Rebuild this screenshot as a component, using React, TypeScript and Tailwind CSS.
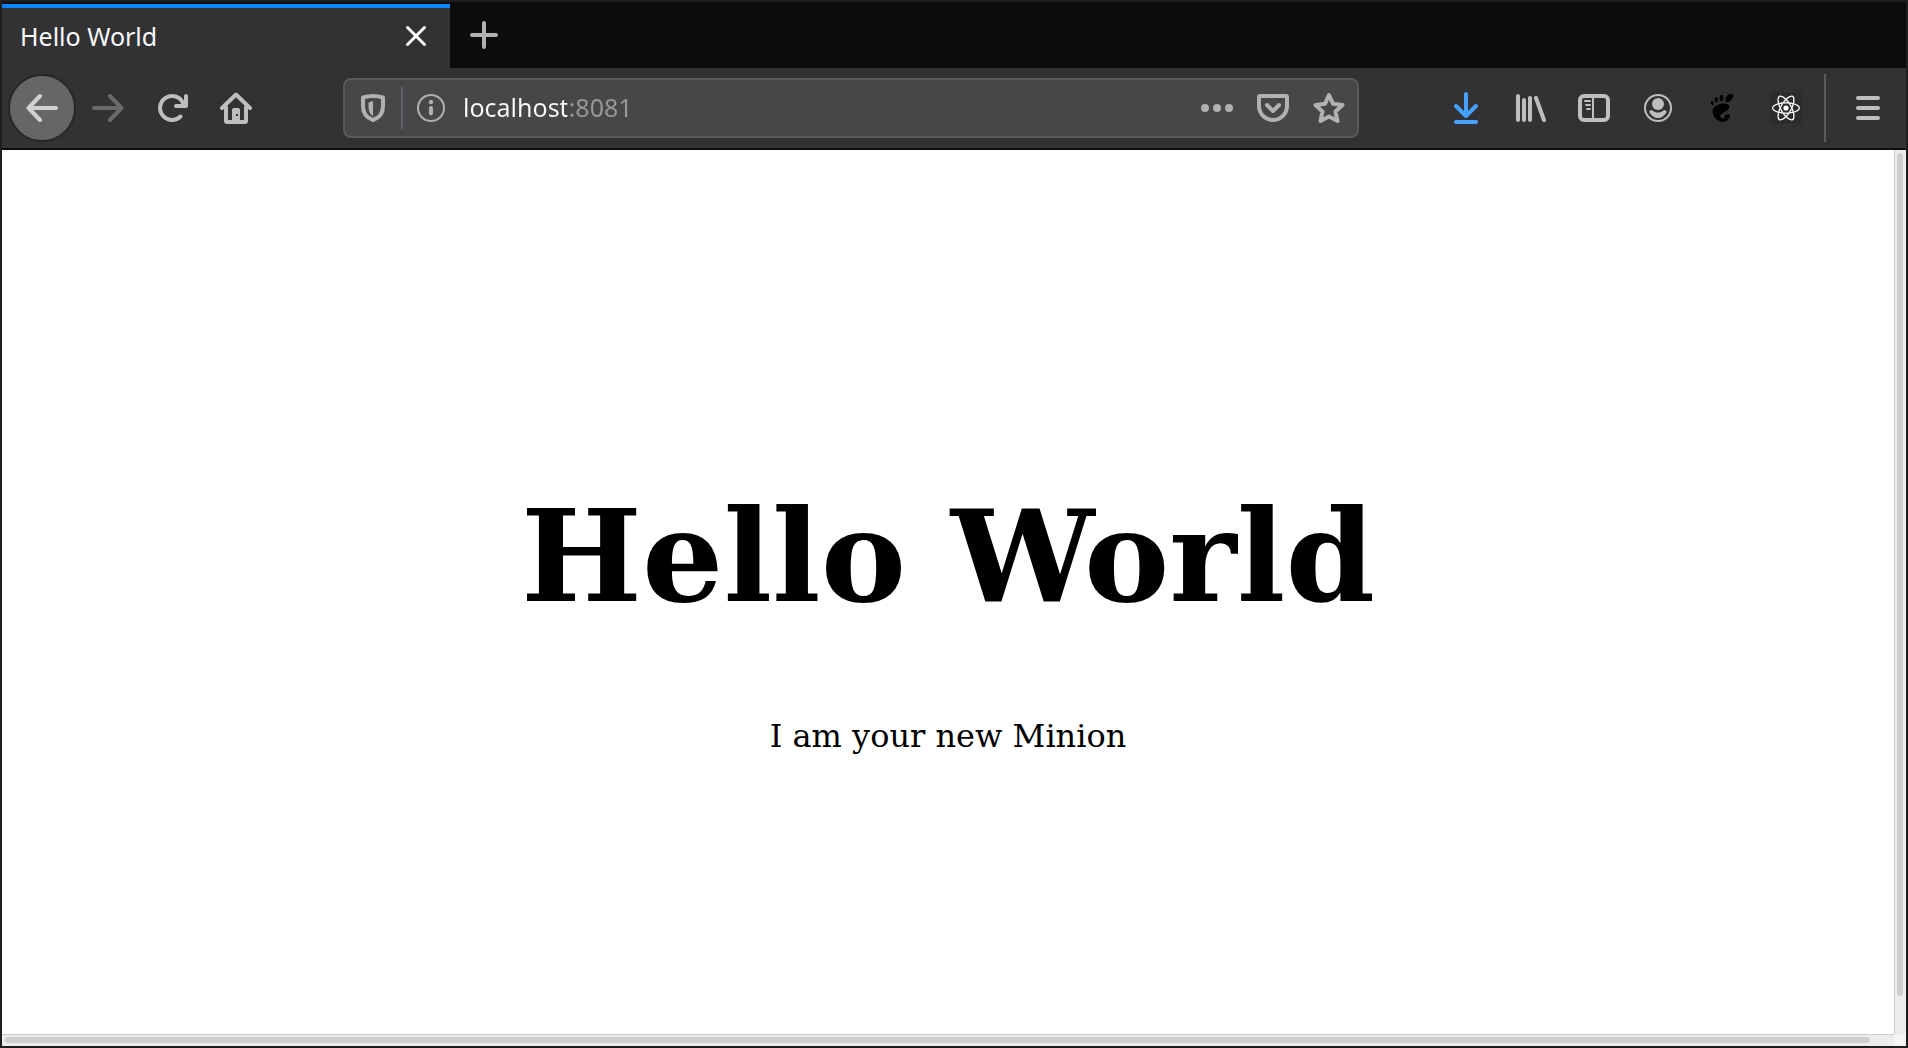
import type { ReactNode } from "react";
import { SiGnome, SiReact } from "react-icons/si";

type IconProps = { children: ReactNode; className?: string };

function Icon({ children, className = "" }: IconProps) {
  return (
    <svg
      viewBox="0 0 32 32"
      className={`size-8 shrink-0 ${className}`}
      fill="none"
      stroke="currentColor"
      strokeWidth="4"
      strokeLinecap="round"
      strokeLinejoin="round"
      aria-hidden="true"
    >
      {children}
    </svg>
  );
}

function ToolButton({ label, children, className = "w-16" }: { label: string; children: ReactNode; className?: string }) {
  return (
    <button type="button" aria-label={label} className={`flex h-16 shrink-0 items-center justify-center ${className}`}>
      {children}
    </button>
  );
}

function TabStrip() {
  return (
    <div className="flex h-16 shrink-0 bg-[#0c0c0d]">
      <div className="flex w-[448px] items-center justify-between border-t-4 border-[#0a84ff] bg-[#323234] pr-4 pb-1 pl-[18px]">
        <span className="text-[25px] leading-8 text-[#f9f9fa]">Hello World</span>
        <button type="button" aria-label="Close tab" className="flex size-9 items-center justify-center text-white">
          <Icon>
            <path d="M7.5 7.5l17 17M24.5 7.5l-17 17" strokeWidth="3" />
          </Icon>
        </button>
      </div>
      <button type="button" aria-label="New tab" className="flex w-[68px] items-center justify-center pb-0.5 text-[#b1b1b3]">
        <Icon>
          <path d="M16 4v24M4 16h24" />
        </Icon>
      </button>
    </div>
  );
}

function AddressBar() {
  return (
    <div className="mr-[75px] ml-[75px] flex h-[60px] min-w-0 flex-1 items-center rounded-lg border-2 border-[#5a5a5c] bg-[#474749] text-[#b1b1b3]">
      <ToolButton label="Tracking protection" className="w-14">
        <Icon>
          <path d="M6 5.500C9 4.600 12.500 4 16 4s7 .6 10 1.500V14c0 7-4 12-10 14C10 26 6 21 6 14z" />
          <path d="M11.500 10.500L16 9v15c-3.500-2-4.500-6-4.500-10z" fill="currentColor" stroke="none" />
        </Icon>
      </ToolButton>
      <div className="h-[42px] w-0.5 bg-[#5f606b]" />
      <ToolButton label="Site information" className="w-14">
        <Icon>
          <circle cx="16" cy="16" r="13" strokeWidth="2" />
          <circle cx="16" cy="10" r="2.200" fill="currentColor" stroke="none" />
          <path d="M16 16v5.500" />
        </Icon>
      </ToolButton>
      <input
        type="text"
        aria-label="Address"
        defaultValue="localhost:8081"
        className="ml-1 h-12 min-w-0 flex-1 bg-[linear-gradient(to_right,#f9f9fa_104px,#98989a_104px)] bg-clip-text pb-0.5 text-[25px] text-transparent outline-none"
      />
      <div className="flex shrink-0">
        <ToolButton label="Page actions" className="w-14">
          <Icon>
            <g fill="currentColor" stroke="none">
              <circle cx="4" cy="16" r="4" />
              <circle cx="16" cy="16" r="4" />
              <circle cx="28" cy="16" r="4" />
            </g>
          </Icon>
        </ToolButton>
        <ToolButton label="Save to Pocket" className="w-14">
          <Icon>
            <path d="M3 4h26a1 1 0 0 1 1 1v9a14 14 0 0 1-28 0V5a1 1 0 0 1 1-1z" />
            <path d="M10 13l6 6 6-6" />
          </Icon>
        </ToolButton>
        <ToolButton label="Bookmark this page" className="w-14">
          <Icon>
            <path d="M16 3l4 8.800 9.500 1.200-7 6.500 2 9.500-8.500-4.500L7.500 29l2-9.500-7-6.500 9.500-1.200z" />
          </Icon>
        </ToolButton>
      </div>
    </div>
  );
}

function Toolbar() {
  return (
    <div className="flex h-[82px] shrink-0 items-center border-b-2 border-[#0c0c0d] bg-[#323234] pr-1.5 pl-[6px] text-[#bebebf]">
      <button
        type="button"
        aria-label="Back"
        className="flex size-[68px] shrink-0 items-center justify-center rounded-full border-2 border-[#262627] bg-[#666666] text-[#d2d2d2]"
      >
        <Icon>
          <path d="M30 16H2.500M14 4L2.500 16 14 28" />
        </Icon>
      </button>
      <ToolButton label="Forward">
        <Icon className="text-[#6a6a6c]">
          <path d="M2 16h27.500M18 4l11.500 12L18 28" />
        </Icon>
      </ToolButton>
      <ToolButton label="Reload">
        <Icon>
          <path d="M24.500 24.500A12 12 0 1 1 27 11" />
          <path d="M30 4v10H20" />
          <path d="M24 13l6-6v7h-6z" fill="currentColor" stroke="none" />
        </Icon>
      </ToolButton>
      <ToolButton label="Home">
        <Icon>
          <path d="M2 16L16 2.500 30 16M6 15v14a1 1 0 0 0 1 1h18a1 1 0 0 0 1-1V15" />
          <path d="M12 30V18a2 2 0 0 1 2-2h4a2 2 0 0 1 2 2v12z" fill="currentColor" stroke="none" />
          <path d="M16 22h2v2h-2z" fill="#323234" stroke="none" />
        </Icon>
      </ToolButton>

      <AddressBar />

      <ToolButton label="Downloads">
        <Icon className="text-[#45a1ff]">
          <path d="M16 2v21M6 14l10 10 10-10M6 30h20" />
        </Icon>
      </ToolButton>
      <ToolButton label="Library">
        <Icon>
          <path d="M4 4v24M10 8v20M16 6v22M22 6l8 22" />
        </Icon>
      </ToolButton>
      <ToolButton label="Sidebars">
        <Icon>
          <rect x="2" y="4" width="28" height="24" rx="4" />
          <path d="M15 5v22" strokeWidth="2" />
          <path d="M7 9h5M8 13h4M9 17h3" strokeWidth="2" />
        </Icon>
      </ToolButton>
      <ToolButton label="Account">
        <Icon>
          <circle cx="16" cy="16" r="13" strokeWidth="2" />
          <circle cx="16" cy="12" r="6" fill="currentColor" stroke="none" />
          <path d="M10 18c2 2 4 2.500 6 2.500s4-.5 6-2.500c2 0 3 1 2.500 2.500C22.500 24 19.500 26 16 26s-6.500-2-8.500-5.500C7 19 8 18 10 18z" fill="currentColor" stroke="none" />
        </Icon>
      </ToolButton>
      <ToolButton label="GNOME Shell integration">
        <SiGnome className="size-7 text-black" />
      </ToolButton>
      <ToolButton label="React Developer Tools">
        <span className="flex size-8 items-center justify-center bg-[#2c2c2d]">
          <SiReact className="size-7 text-white" />
        </span>
      </ToolButton>
      <div className="ml-[6px] h-[68px] w-0.5 shrink-0 bg-[#5c5c5e]" />
      <ToolButton label="Open menu" className="ml-2.5 w-16">
        <Icon>
          <path d="M6 6h20M6 16h20M6 26h20" />
        </Icon>
      </ToolButton>
    </div>
  );
}

export default function App() {
  return (
    <div className="flex h-screen flex-col border-2 border-[#1e1e1f] bg-[#0c0c0d] pt-0.5 font-['Noto_Sans',sans-serif]">
      <TabStrip />
      <Toolbar />
      <div className="grid min-h-0 flex-1 grid-cols-[1fr_12px] grid-rows-[1fr_12px] bg-white">
        <main className="flex flex-col items-center justify-center gap-24 bg-white pt-16 text-center font-['DejaVu_Serif',serif] text-black">
          <h1 className="text-9xl font-bold">Hello World</h1>
          <p className="text-[32px] leading-10">I am your new Minion</p>
        </main>
        <div className="border-l border-[#cccccc] bg-[#edecec] pt-[3px] pr-[3px] pb-[38px] pl-0.5">
          <div className="h-full rounded-full bg-[#cecece]" />
        </div>
        <div className="border-t border-[#cccccc] bg-[#edecec] pt-0.5 pr-6 pb-[3px] pl-[3px]">
          <div className="h-full rounded-full bg-[#cecece]" />
        </div>
        <div className="bg-[#f6f5f5]" />
      </div>
    </div>
  );
}
